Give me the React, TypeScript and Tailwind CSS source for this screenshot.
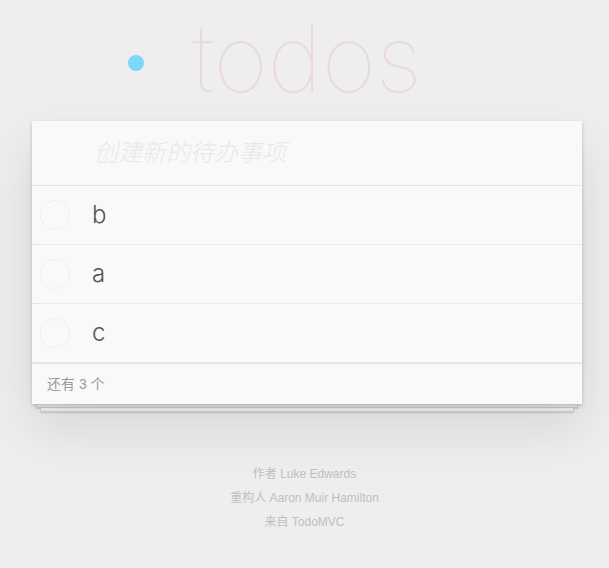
import * as React from "react"

const todos = ["b", "a", "c"]

function TodoRow({ title }: { title: string }) {
  return (
    <li className="flex h-[59px] items-center border-b border-dotted border-[#dcdcdc]">
      <div className="ml-[8px] h-[30px] w-[30px] rounded-full border border-dotted border-[#e4e4e4]" />
      <span
        className="ml-[22px] text-[24px] font-light leading-none text-[#555555]"
        style={{ fontFamily: 'Inter, "Liberation Sans", sans-serif' }}
      >
        {title}
      </span>
    </li>
  )
}

export default function App() {
  return (
    <div
      className="min-h-[568px] w-full bg-[#eeeeee] pt-[16px]"
      style={{ fontFamily: '"Helvetica Neue", "Liberation Sans", Arial, "Noto Sans CJK SC", sans-serif' }}
    >
      <header className="flex h-[105px] items-start">
        <div className="ml-[128px] mt-[39px] h-[16px] w-[16px] rounded-full bg-[#7fd7f8]" />
        <h1
          className="ml-[48px] mt-[-14px] text-[94px] font-thin leading-[1.2] tracking-[-0.5px] text-[#eadada]"
          style={{ fontFamily: 'Inter, "Liberation Sans", sans-serif' }}
        >
          todos
        </h1>
      </header>

      <section className="relative ml-[32px] w-[550px]">
        <div className="relative z-10 bg-[#f9f9f9] shadow-[0_2px_4px_rgba(0,0,0,0.2),0_25px_50px_rgba(0,0,0,0.1)]">
          <div className="flex h-[65px] items-center border-b border-[#e6e6e6] pl-[62px]">
            <span className="text-[24px] italic font-light text-[#e8e8e8]">创建新的待办事项</span>
          </div>
          <ul>
            {todos.map((t) => (
              <TodoRow key={t} title={t} />
            ))}
          </ul>
          <footer className="flex h-[41px] items-center border-t border-[#e2e2e2] pl-[15px] text-[14px] text-[#9a9a9a]">
            还有 3 个
          </footer>
        </div>
        <div className="mx-[4px] h-[4px] border-x border-b border-[#d2d2d2] bg-[#f6f6f6] shadow-[0_1px_1px_rgba(0,0,0,0.15)]" />
        <div className="mx-[8px] h-[4px] border-x border-b border-[#d2d2d2] bg-[#f4f4f4] shadow-[0_1px_2px_rgba(0,0,0,0.15)]" />
      </section>

      <footer className="mt-[54px] flex flex-col items-center gap-[8px] text-[12px] leading-[16px] text-[#bfbfbf]">
        <p>作者 Luke Edwards</p>
        <p>重构人 Aaron Muir Hamilton</p>
        <p>来自 TodoMVC</p>
      </footer>
    </div>
  )
}
